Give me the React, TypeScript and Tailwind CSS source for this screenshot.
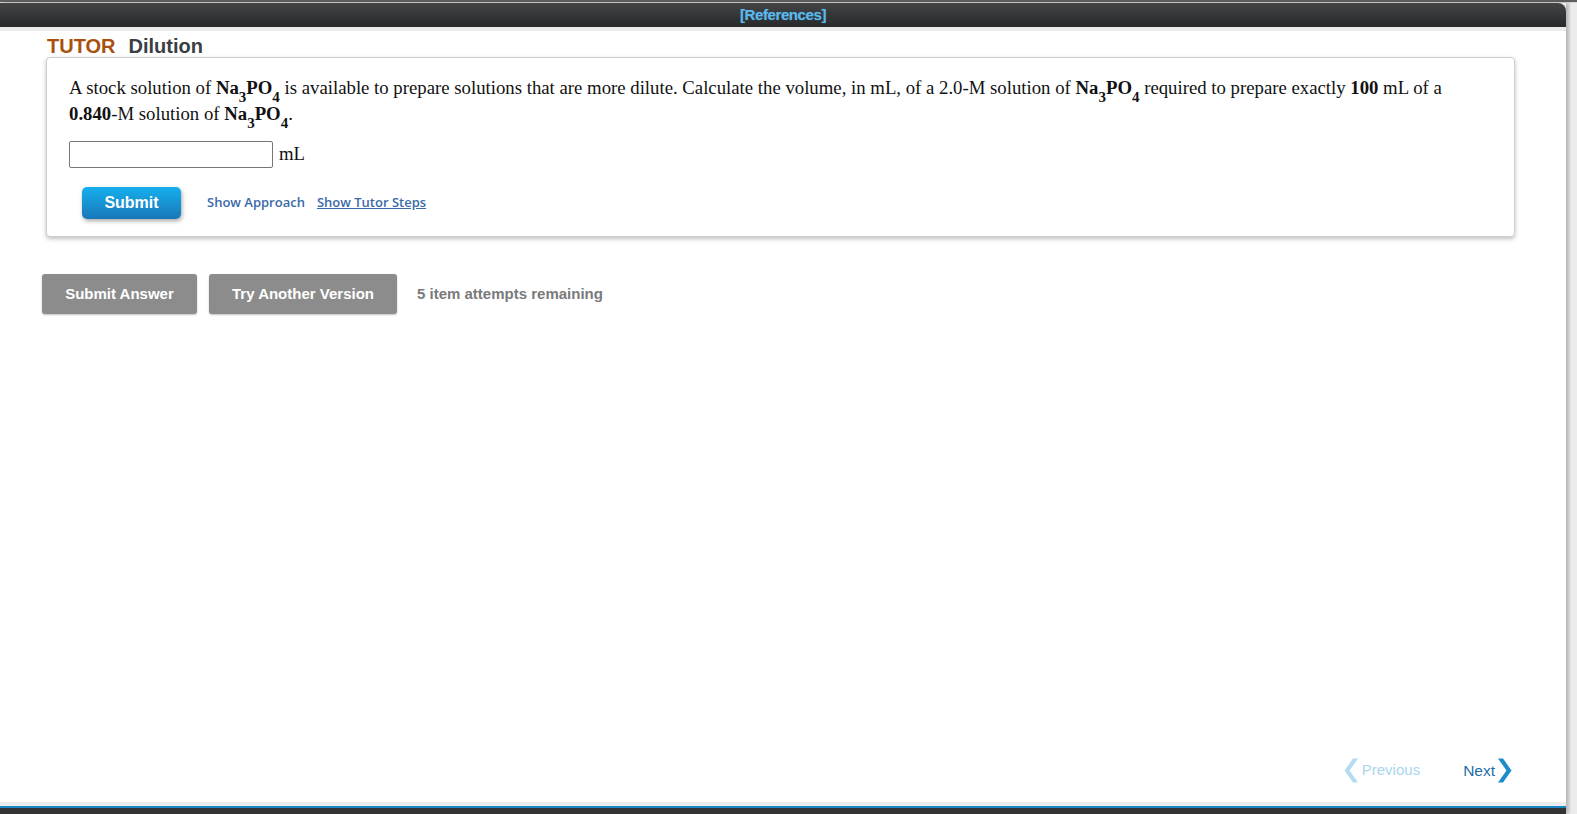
const Formula = () => (
  <b>
    Na<sub className="text-[15px] align-[-4px] leading-[0]">3</sub>PO<sub className="text-[15px] align-[-4px] leading-[0]">4</sub>
  </b>
);

export default function App() {
  return (
    <div className="w-full h-[814px] bg-[#ececec] flex flex-col overflow-hidden font-['Liberation_Sans',Arial,sans-serif]">
      <div className="h-[2px] bg-[#5f5f5f]" />
      <div className="h-[1px] bg-[#d6d6d6]" />
      <div className="flex-1 flex min-h-0">
        <div className="w-[1566px] shrink-0 flex flex-col shadow-[3px_0_3px_rgba(0,0,0,0.22)]">
          <div className="h-[24px] rounded-tr-[8px] bg-gradient-to-b from-[#434446] to-[#28292a] flex items-center justify-center">
            <span className="text-[15px] font-bold text-[#5ab9ec] tracking-[-0.4px] [text-shadow:0_0_1px_rgba(90,185,236,0.5)]">[References]</span>
          </div>
          <div className="h-[4px] bg-[#ececec]" />
          <div className="flex-1 bg-white flex flex-col">
            <div className="pl-[47px] pt-[4px] h-[26px] flex items-center gap-[13px] text-[20px] leading-none">
              <span className="font-bold text-[#a8500d]">TUTOR</span>
              <span className="font-semibold text-[#3b3f44]">Dilution</span>
            </div>
            <div className="ml-[46px] w-[1469px] border border-[#cfcfcf] rounded-[4px] shadow-[0_2px_4px_rgba(0,0,0,0.25)] bg-white pl-[22px] pr-[20px] pt-[17px] pb-[17px]">
              <p className="font-['Liberation_Serif','Times_New_Roman',serif] text-[18.75px] leading-[26px] text-[#111]">
                A stock solution of <Formula /> is available to prepare solutions that are more dilute. Calculate the volume, in mL, of a 2.0-M solution of <Formula /> required to prepare exactly <b>100</b> mL of a <b>0.840</b>-M solution of <Formula />.
              </p>
              <div className="mt-[13px] flex items-center gap-[6px]">
                <input className="w-[204px] h-[27px] border border-[#767676] rounded-[2px] outline-none" />
                <span className="font-['Liberation_Serif','Times_New_Roman',serif] text-[18.75px] text-[#111]">mL</span>
              </div>
              <div className="mt-[19px] flex items-center">
                <button className="ml-[13px] w-[99px] h-[32px] rounded-[5px] bg-gradient-to-b from-[#15b0ee] to-[#1877b8] text-white font-bold text-[16px] shadow-[1px_2px_4px_rgba(0,0,0,0.35)]">
                  Submit
                </button>
                <span className="ml-[26px] text-[13px] font-semibold text-[#3a6aa8] font-['Open_Sans',sans-serif]">Show Approach</span>
                <span className="ml-[12px] text-[13px] font-semibold text-[#3a6aa8] underline font-['Open_Sans',sans-serif]">Show Tutor Steps</span>
              </div>
            </div>
            <div className="mt-[37px] ml-[42px] flex items-center">
              <button className="w-[155px] h-[40px] rounded-[3px] bg-[#8c8c8c] text-white font-bold text-[15px] shadow-[0_1px_2px_rgba(0,0,0,0.25)]">
                Submit Answer
              </button>
              <button className="ml-[12px] w-[188px] h-[40px] rounded-[3px] bg-[#8c8c8c] text-white font-bold text-[15px] shadow-[0_1px_2px_rgba(0,0,0,0.25)]">
                Try Another Version
              </button>
              <span className="ml-[20px] text-[15px] font-bold text-[#7a7a7a]">5 item attempts remaining</span>
            </div>
            <div className="flex-1" />
            <div className="flex justify-end items-center pr-[54px] pb-[19px] text-[15px]">
              <div className="flex items-center gap-[3px] text-[#a9d6ee]">
                <svg width="15" height="25" viewBox="0 0 15 25">
                  <path d="M14 0.5 L5.5 12.5 L14 24.5 L9 24.5 L0.5 12.5 L9 0.5 Z" fill="#b3dcf0" />
                </svg>
                <span>Previous</span>
              </div>
              <div className="ml-[43px] flex items-center gap-[2px] text-[#1d6ea6]">
                <span className="text-[15.5px]">Next</span>
                <svg width="15" height="25" viewBox="0 0 15 25">
                  <path d="M1 0.5 L9.5 12.5 L1 24.5 L6 24.5 L14.5 12.5 L6 0.5 Z" fill="#1b8ccc" />
                </svg>
              </div>
            </div>
          </div>
          <div className="h-[4px] bg-[#ececec]" />
          <div className="h-[2px] bg-[#1a86c4]" />
          <div className="h-[6px] bg-[#333333]" />
        </div>
        <div className="flex-1" />
      </div>
    </div>
  );
}
